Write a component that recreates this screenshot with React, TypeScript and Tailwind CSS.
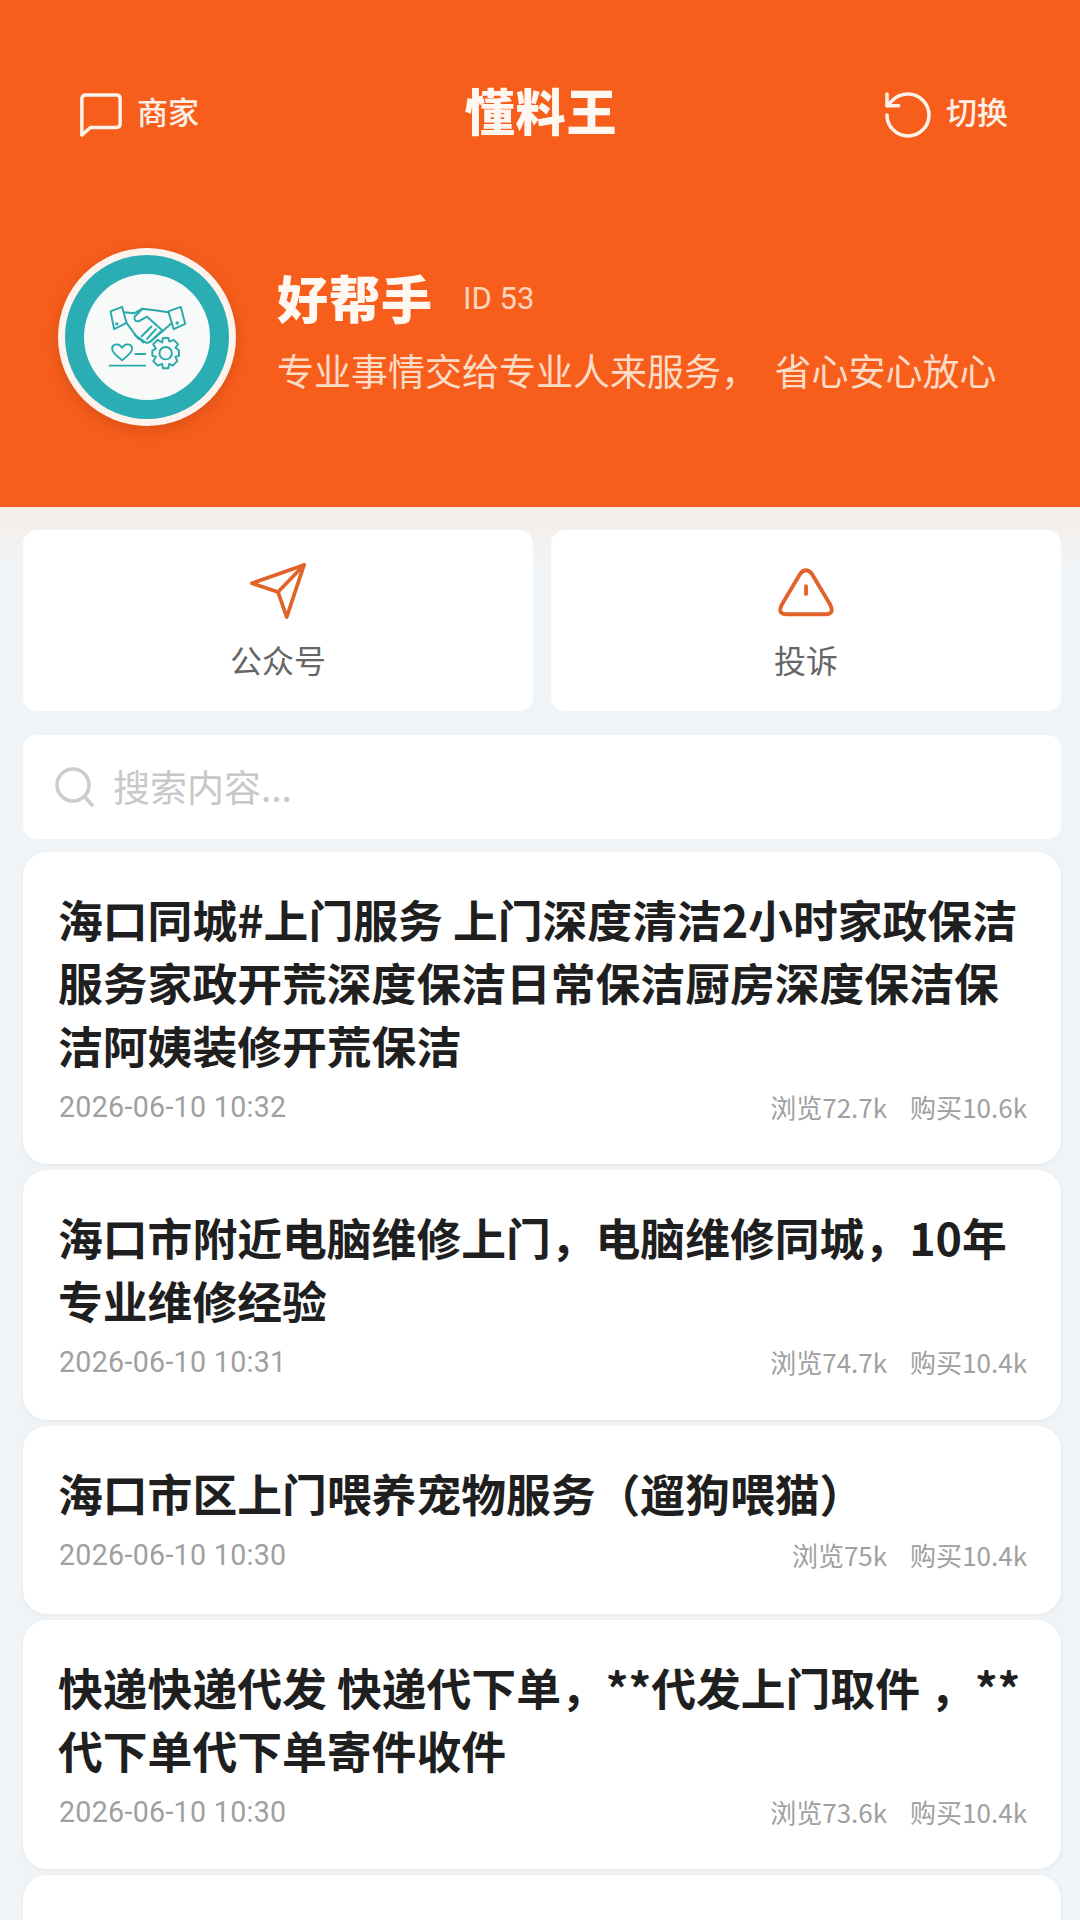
import { RotateCcw } from "lucide-react";

const cjk = { fontFamily: '"Noto Sans CJK SC", "Noto Sans", sans-serif' };

function HandshakeLogo() {
  return (
    <svg viewBox="0 0 90 75" className="w-[80px] h-[67px]" fill="none" stroke="#2aa9ab" strokeWidth="2.2" strokeLinecap="round" strokeLinejoin="round">
      <path d="M4 7 L17 2 L22 20 L8 27 Z" />
      <circle cx="11" cy="21" r="0.8" />
      <path d="M69 7 L83 2 L88 21 L75 27 Z" />
      <circle cx="79" cy="20" r="0.8" />
      <path d="M19 8 L31 9 L40 4 L56 6 L69 8 M72 21 L50 40 Q46 44 42 41 L33 35 L22 20" />
      <path d="M40 4 L31 13 Q30 19 36 18 L45 13 L63 29" />
      <path d="M50 24 L39 35 M55 27 L45 38 M60 30 L50 40" />
      <path d="M31 33 L36 38 M36 37 L41 42" />
      <path d="M17 62 C7 54 5 51 6 47 C8 43 14 43 17 48 C20 43 26 43 28 47 C29 51 27 54 17 62 Z" />
      <path d="M32 55 L43 55" />
      <path d="M3 68 L43 68" />
      <circle cx="66" cy="54" r="7" />
      <path d="M63 37 L69 37 L70 41 L75 39 L80 44 L77 48 L81 51 L81 57 L77 58 L79 63 L74 68 L70 66 L69 71 L63 71 L62 66 L57 68 L52 63 L55 58 L51 57 L51 51 L55 49 L52 44 L57 39 L62 42 Z" />
    </svg>
  );
}

function Item({ title, date, view, buy, h }: { title: string[]; date: string; view: string; buy: string; h: string }) {
  return (
    <div className={`bg-white rounded-[24px] pl-[35px] pr-[34px] pt-[35px] shadow-[0_1px_4px_rgba(0,0,0,0.06)] ${h}`}>
      <div className="text-[44.8px] leading-[63px] font-bold text-[#1f1f1f]">
        {title.map((t) => (
          <div key={t} className="whitespace-nowrap">{t}</div>
        ))}
      </div>
      <div className="flex justify-between items-center mt-[13px] text-[26px] leading-[36px] text-[#a0a0a0]">
        <span className="text-[28.6px] tracking-[0.3px] pl-[1px]" style={{ fontFamily: 'Roboto, sans-serif' }}>{date}</span>
        <span className="flex gap-[23px]">
          <span>浏览{view}</span>
          <span>购买{buy}</span>
        </span>
      </div>
    </div>
  );
}

export default function App() {
  return (
    <div className="w-[1080px] h-[1920px] overflow-hidden bg-[#f1f4f7] flex flex-col" style={cjk}>
      <header className="h-[507px] bg-[#f75e1c] shrink-0 text-white">
        <div className="flex items-center justify-between pt-[79px] pl-[79px] pr-[72px]">
          <div className="flex items-center gap-[14px] w-[195px]">
            <svg viewBox="0 0 44 46" className="w-[44px] h-[44px] mt-[6px]" fill="none" stroke="#fdf3ea" strokeWidth="3.6" strokeLinejoin="round">
              <path d="M2 6 Q2 2 6 2 H38 Q42 2 42 6 V32 Q42 36 38 36 H11 L2 44 Z" />
            </svg>
            <span className="text-[31px] font-medium text-[#fdf0e6]">商家</span>
          </div>
          <h1 className="text-[50px] leading-[60px] mb-[5px] font-black tracking-[1px] text-[#fff8f2]">懂料王</h1>
          <div className="flex items-center justify-end gap-[10px] w-[200px]">
            <RotateCcw size={56} strokeWidth={1.5} color="#fdf3ea" className="mt-[6px]" />
            <span className="text-[31px] font-medium text-[#fdf0e6]">切换</span>
          </div>
        </div>
        <div className="flex items-center mt-[104px] pl-[58px]">
          <div className="w-[178px] h-[178px] rounded-full bg-[#fdf3ec] p-[7px] shadow-[0_4px_14px_rgba(120,40,0,0.25)] shrink-0">
            <div className="w-full h-full rounded-full bg-[#2aaeb4] p-[19px]">
              <div className="w-full h-full rounded-full bg-[#f8fafa] flex items-center justify-center pt-[2px]">
                <HandshakeLogo />
              </div>
            </div>
          </div>
          <div className="ml-[41px] mb-[15px]">
            <div className="flex items-center">
              <span className="text-[51px] leading-[64px] font-black tracking-[1px] text-[#fff8f2]">好帮手</span>
              <span className="ml-[30px] mt-[4px] text-[31px] text-[#fbd5bd]" style={{ fontFamily: 'Roboto, sans-serif' }}>ID 53</span>
            </div>
            <div className="text-[37px] leading-[48px] mt-[17px] text-[#fcdcc6] whitespace-pre">专业事情交给专业人来服务，  省心安心放心</div>
          </div>
        </div>
      </header>

      <main className="flex-1 flex flex-col pl-[23px] pr-[19px] pt-[23px] bg-gradient-to-b from-[#f4ede8] from-0% to-[#f1f4f7] to-[60px]">
        <div className="grid grid-cols-2 gap-[18px]">
          <div className="h-[181px] bg-white rounded-[14px] flex flex-col items-center pt-[33px]">
            <svg viewBox="0 0 58 58" className="w-[56px] h-[56px]" fill="none" stroke="#e2622a" strokeWidth="3.8" strokeLinejoin="round" strokeLinecap="round">
              <path d="M56 2 L2 21 L29 30 L38 56 Z" />
              <path d="M56 2 L29 30" />
            </svg>
            <span className="text-[32px] leading-[40px] mt-[20px] text-[#666666]">公众号</span>
          </div>
          <div className="h-[181px] bg-white rounded-[14px] flex flex-col items-center pt-[37px]">
            <svg viewBox="0 0 58 50" className="w-[56px] h-[50px]" fill="none" stroke="#e2622a" strokeWidth="4" strokeLinejoin="round" strokeLinecap="round">
              <path d="M23 6 Q29 -1 35 6 L54 38 Q59 48 49 48 H9 Q-1 48 4 38 Z" />
              <path d="M29 19 V27" />
            </svg>
            <span className="text-[32px] leading-[40px] mt-[22px] text-[#666666]">投诉</span>
          </div>
        </div>

        <div className="h-[104px] mt-[24px] bg-white rounded-[14px] flex items-center pl-[32px] text-[37px] text-[#c8c8c8]">
          <svg viewBox="0 0 40 40" className="w-[40px] h-[40px] mr-[18px]" fill="none" stroke="#cccccc" strokeWidth="3.6" strokeLinecap="round">
            <circle cx="18" cy="18" r="16" />
            <path d="M30 30 L37 38" />
          </svg>
          搜索内容...
        </div>

        <div className="flex flex-col gap-[6px] mt-[13px]">
          <Item h="h-[312px]" title={["海口同城#上门服务 上门深度清洁2小时家政保洁", "服务家政开荒深度保洁日常保洁厨房深度保洁保", "洁阿姨装修开荒保洁"]} date="2026-06-10 10:32" view="72.7k" buy="10.6k" />
          <Item h="h-[250px]" title={["海口市附近电脑维修上门，电脑维修同城，10年", "专业维修经验"]} date="2026-06-10 10:31" view="74.7k" buy="10.4k" />
          <Item h="h-[188px]" title={["海口市区上门喂养宠物服务（遛狗喂猫）"]} date="2026-06-10 10:30" view="75k" buy="10.4k" />
          <Item h="h-[249px]" title={["快递快递代发 快递代下单，**代发上门取件 ，**", "代下单代下单寄件收件"]} date="2026-06-10 10:30" view="73.6k" buy="10.4k" />
          <div className="h-[200px] bg-white rounded-[24px] shadow-[0_1px_4px_rgba(0,0,0,0.06)]" />
        </div>
      </main>
    </div>
  );
}
